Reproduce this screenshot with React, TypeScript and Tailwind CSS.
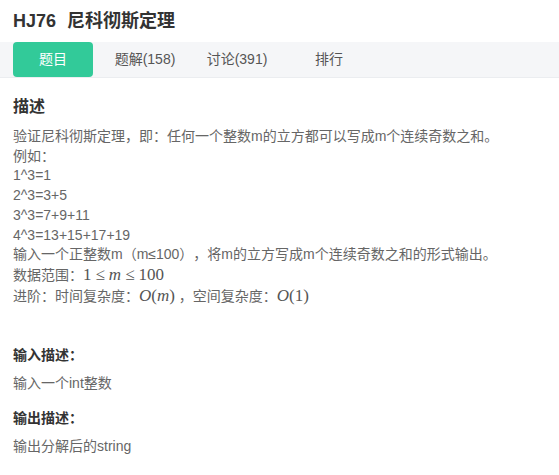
const tabs = [
  { label: '题目', active: true },
  { label: '题解(158)' },
  { label: '讨论(391)' },
  { label: '排行' },
];

const examples = ['1^3=1', '2^3=3+5', '3^3=7+9+11', '4^3=13+15+17+19'];

function M({ children }: { children: React.ReactNode }) {
  return (
    <span className="font-['Liberation_Serif','DejaVu_Serif',serif] text-[17px] leading-[19px] text-[#555]">{children}</span>
  );
}

function Rel() {
  return <span className="px-[4px]">≤</span>;
}

export default function App() {
  return (
    <div className="h-[475px] w-[559px] overflow-hidden bg-white font-['Liberation_Sans','Noto_Sans_CJK_SC',sans-serif] text-[#333] [text-spacing-trim:space-all]">
      <h1 className="flex h-[42px] items-center px-[13px] text-[18px] font-bold">
        <span>HJ76</span>
        <span className="ml-[11px]">尼科彻斯定理</span>
      </h1>

      <div className="flex h-[36px] gap-3 border-b border-[#ebedf0] bg-[#f5f6f8] pl-[13px]">
        {tabs.map((t) => (
          <div
            key={t.label}
            className={
              t.active
                ? 'flex w-20 items-center justify-center rounded bg-[#32ca99] text-[14px] text-white'
                : 'flex w-20 items-center justify-center text-[14px] text-[#555]'
            }
          >
            {t.label}
          </div>
        ))}
      </div>

      <div className="px-[13px] pt-[18px]">
        <h2 className="text-[16px] font-bold leading-[22px]">描述</h2>
        <div className="mt-[9px] text-[14px] leading-[19.7px] text-[#666]">
          <p>验证尼科彻斯定理，即：任何一个整数m的立方都可以写成m个连续奇数之和。</p>
          <p>例如：</p>
          {examples.map((e) => (
            <p key={e}>{e}</p>
          ))}
          <p>输入一个正整数m（m≤100），将m的立方写成m个连续奇数之和的形式输出。</p>
          <p>
            数据范围：
            <M>
              1<Rel />
              <i>m</i>
              <Rel />
              100
            </M>
          </p>
          <p>
            进阶：时间复杂度：
            <M>
              <i>O</i>(<i>m</i>)
            </M>{' '}
            ，空间复杂度：
            <M>
              <i>O</i>(1)
            </M>
          </p>
        </div>

        <h3 className="mt-[39px] text-[14px] font-bold leading-[20px]">输入描述：</h3>
        <p className="mt-[8px] text-[14px] leading-[20px] text-[#666]">输入一个int整数</p>
        <h3 className="mt-[15px] text-[14px] font-bold leading-[20px]">输出描述：</h3>
        <p className="mt-[8px] text-[14px] leading-[20px] text-[#666]">输出分解后的string</p>
      </div>
    </div>
  );
}
